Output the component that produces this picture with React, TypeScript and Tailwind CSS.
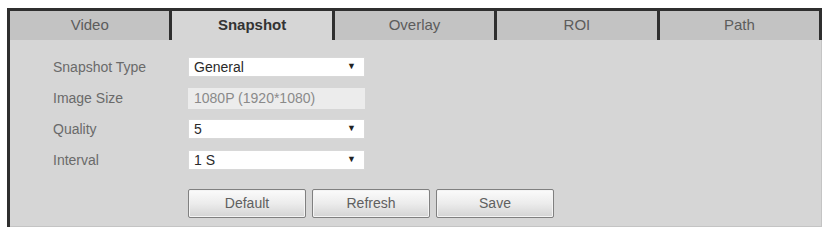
import React, { useState } from 'react';

const tabs = ['Video', 'Snapshot', 'Overlay', 'ROI', 'Path'];

function FakeSelect({ value }: { value: string }) {
  return (
    <div className="flex h-[20px] w-[177px] items-center justify-between border border-[#d8d8d8] bg-white pl-[5px] pr-[8px] text-[14px] text-[#2a2a2a]">
      <span>{value}</span>
      <span className="text-[9px] text-[#222]">▼</span>
    </div>
  );
}

function Row({ label, children }: { label: string; children: React.ReactNode }) {
  return (
    <div className="flex h-[20px] items-center">
      <div className="w-[135px] text-[14px] text-[#6a6a6a]">{label}</div>
      {children}
    </div>
  );
}

function Btn({ label }: { label: string }) {
  return (
    <button className="h-[29px] w-[118px] rounded-[2px] border border-[#808080] bg-gradient-to-b from-[#fbfbfb] via-[#ececec] to-[#d4d4d4] text-[14px] text-[#606060] shadow-[inset_0_0_0_1px_#f4f4f4]">
      {label}
    </button>
  );
}

export default function App() {
  const [active, setActive] = useState(1);

  return (
    <div className="h-[229px] w-[826px] bg-white pl-[7px] pt-[8px] font-['Liberation_Sans',Arial,sans-serif]">
      <div className="w-[815px] border-l-[3px] border-[#2f2f2f]">
        <div className="flex h-[32px] border-t-[3px] border-[#2f2f2f]">
          {tabs.map((t, i) => (
            <div
              key={t}
              onClick={() => setActive(i)}
              className={
                i === active
                  ? 'flex flex-1 items-center justify-center border-r-[3px] border-[#2f2f2f] bg-[#d6d6d6] text-[15px] font-bold text-[#333]'
                  : 'flex flex-1 items-center justify-center border-r-[3px] border-[#2f2f2f] bg-[#c3c3c3] text-[15px] text-[#5c5c5c]'
              }
            >
              {t}
            </div>
          ))}
        </div>
        <div className="flex h-[187px] flex-col gap-[11px] border-r border-b border-[#c4c4c4] bg-[#d6d6d6] pl-[43px] pt-[17px]">
          <Row label="Snapshot Type">
            <FakeSelect value="General" />
          </Row>
          <Row label="Image Size">
            <div className="flex h-[21px] w-[177px] items-center bg-[#ececec] pl-[6px] text-[14px] text-[#8a8a8a]">
              1080P (1920*1080)
            </div>
          </Row>
          <Row label="Quality">
            <FakeSelect value="5" />
          </Row>
          <Row label="Interval">
            <FakeSelect value="1 S" />
          </Row>
          <div className="mt-[8px] flex gap-[6px] pl-[135px]">
            <Btn label="Default" />
            <Btn label="Refresh" />
            <Btn label="Save" />
          </div>
        </div>
      </div>
    </div>
  );
}
